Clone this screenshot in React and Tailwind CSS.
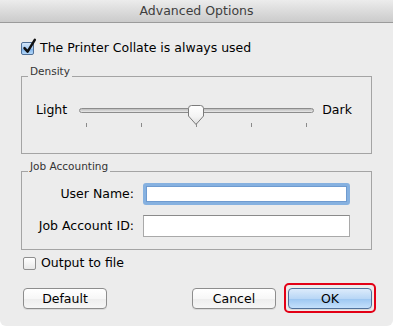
import { useState } from "react";

function CheckBox({ checked, onChange }) {
  return (
    <span
      onClick={onChange}
      className={
        "relative inline-block h-[13px] w-[13px] shrink-0 rounded-[2px] border " +
        (checked
          ? "border-[#4f6f96] bg-[linear-gradient(to_bottom,#d3e6fa_0%,#a6cbf1_50%,#79b0ea_51%,#b4d7f8_100%)]"
          : "border-[#8f8f8f] bg-gradient-to-b from-white to-[#e8e8e8]")
      }
    >
      {checked && (
        <svg
          className="absolute left-[1px] top-[-4px] overflow-visible"
          width="13"
          height="15"
          viewBox="0 0 13 15"
        >
          <path
            d="M1.5 9.2 L4.6 12.6 L11.8 0.8"
            fill="none"
            stroke="#111"
            strokeWidth="2.5"
            strokeLinecap="round"
            strokeLinejoin="round"
          />
        </svg>
      )}
    </span>
  );
}

function Thumb() {
  return (
    <svg width="18" height="21" viewBox="0 0 18 21">
      <defs>
        <linearGradient id="thumbFill" x1="0" y1="0" x2="0" y2="1">
          <stop offset="0" stopColor="#ffffff" />
          <stop offset="0.6" stopColor="#f3f3f3" />
          <stop offset="1" stopColor="#dcdcdc" />
        </linearGradient>
      </defs>
      <path
        d="M1.5 3.5 Q1.5 0.5 4.5 0.5 H13.5 Q16.5 0.5 16.5 3.5 V11 L9 19.5 L1.5 11 Z"
        fill="url(#thumbFill)"
        stroke="#7b7b7b"
        strokeWidth="1"
      />
    </svg>
  );
}

function Button({ children, primary }) {
  return (
    <button
      type="button"
      className={
        "h-[21px] w-[84px] rounded-[4px] border text-[12.5px] leading-[19px] text-black shadow-[0_1px_0_rgba(0,0,0,0.08)] " +
        (primary
          ? "w-[83px] border-[#50719b] bg-[linear-gradient(to_bottom,#dcebfb_0%,#b9d7f6_50%,#9cc6f1_51%,#c4e0fb_100%)]"
          : "border-[#8d8d8d] bg-[linear-gradient(to_bottom,#ffffff_0%,#f7f7f7_50%,#ededed_51%,#f6f6f6_100%)]")
      }
    >
      {children}
    </button>
  );
}

export default function App() {
  const [collate, setCollate] = useState(true);
  const [toFile, setToFile] = useState(false);

  return (
    <div className="h-[326px] w-[393px] bg-white font-['DejaVu_Sans',sans-serif]">
      <div className="flex h-full flex-col rounded-b-[6px] bg-[#ececec]">
        <div className="h-[23px] border-b border-[#9b9b9b] bg-gradient-to-b from-[#ececec] to-[#cbcbcb] text-center text-[12.5px] leading-[22px] text-[#3e3e3e]">
          Advanced Options
        </div>

        <div className="flex flex-col px-[21px]">
          <label className="mt-[17px] flex h-[16px] items-center gap-[6px] text-[12.5px] text-black">
            <CheckBox checked={collate} onChange={() => setCollate(!collate)} />
            <span>The Printer Collate is always used</span>
          </label>

          <fieldset className="mt-[9px] h-[89px] border border-[#a4a4a4] p-0">
            <legend className="ml-[6px] px-[2px] pb-[9px] text-[10.5px] leading-[13px] text-[#333]">
              Density
            </legend>
            <div className="mt-[14px] flex h-[18px] items-center pl-[14px] text-[12.5px] text-black">
              <span>Light</span>
              <div className="relative ml-[12px] flex h-[18px] w-[235px] items-center">
                <div className="h-[5px] w-full rounded-full border border-[#8c8c8c] bg-gradient-to-b from-[#bdbdbd] to-[#e9e9e9]" />
                <div className="absolute left-[108px] top-[4px]">
                  <Thumb />
                </div>
                <div className="absolute left-0 right-0 top-[22px] flex justify-between px-[7px]">
                  <span className="h-[4px] w-px bg-[#8a8a8a]" />
                  <span className="h-[4px] w-px bg-[#8a8a8a]" />
                  <span className="h-[4px] w-px bg-[#8a8a8a]" />
                  <span className="h-[4px] w-px bg-[#8a8a8a]" />
                  <span className="h-[4px] w-px bg-[#8a8a8a]" />
                </div>
              </div>
              <span className="ml-[8px]">Dark</span>
            </div>
          </fieldset>

          <fieldset className="mt-[6px] border border-[#a4a4a4] p-0 pb-[12px]">
            <legend className="ml-[6px] px-[2px] pb-[9px] text-[10.5px] leading-[13px] text-[#333]">
              Job Accounting
            </legend>
            <div className="mt-[1px] grid grid-cols-[98px_207px] items-center gap-x-[9px] gap-y-[10px] pl-[14px] text-[12.5px] text-black">
              <span className="text-right">User Name:</span>
              <input
                type="text"
                className="h-[22px] w-[207px] rounded-[3px] border-[3px] border-[#86b1e0] bg-white px-[2px] text-[12.5px] outline-none shadow-[inset_0_0_0_1px_#6f9bd0]"
              />
              <span className="text-right">Job Account ID:</span>
              <input
                type="text"
                className="h-[22px] w-[207px] border border-[#a9a9a9] border-t-[#8a8a8a] bg-white px-[4px] text-[12.5px] outline-none"
              />
            </div>
          </fieldset>

          <label className="mt-[5px] flex h-[16px] items-center gap-[5px] pl-[2px] text-[12.5px] text-black">
            <CheckBox checked={toFile} onChange={() => setToFile(!toFile)} />
            <span>Output to file</span>
          </label>

          <div className="mr-[-4px] mt-[12px] flex items-center pl-[2px]">
            <Button>Default</Button>
            <div className="flex-1" />
            <Button>Cancel</Button>
            <div className="ml-[8px] rounded-[5px] border-2 border-[#e30016] px-[2px] py-[1px]">
              <Button primary>OK</Button>
            </div>
          </div>
        </div>
      </div>
    </div>
  );
}
